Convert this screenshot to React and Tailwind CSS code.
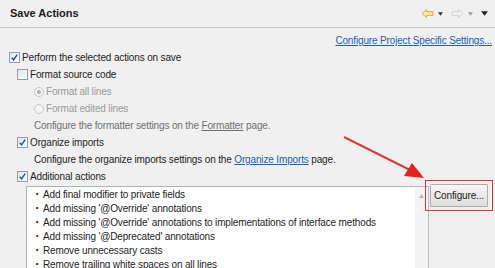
import React from "react";

const Check = ({ checked }) => (
  <span className="inline-flex w-[11px] h-[11px] border border-[#8e9eb5] bg-gradient-to-br from-[#dfe6ef] to-white items-center justify-center shrink-0">
    {checked && (
      <svg width="9" height="9" viewBox="0 0 10 10">
        <path d="M2 5.2 L4 7.6 L8 1.8" stroke="#2c4f9e" strokeWidth="1.7" fill="none" />
      </svg>
    )}
  </span>
);

const Radio = ({ checked }) => (
  <span className="inline-flex w-[10px] h-[10px] rounded-full border border-[#c8c8c8] bg-[#f4f4f4] items-center justify-center shrink-0">
    {checked && <span className="w-[4px] h-[4px] rounded-full bg-[#b0b0b0]" />}
  </span>
);

const items = [
  "Add final modifier to private fields",
  "Add missing '@Override' annotations",
  "Add missing '@Override' annotations to implementations of interface methods",
  "Add missing '@Deprecated' annotations",
  "Remove unnecessary casts",
  "Remove trailing white spaces on all lines",
];

export default function App() {
  return (
    <div
      className="relative w-[495px] h-[268px] overflow-hidden bg-[#f0f0f0] text-[10px] tracking-[-0.15px] text-[#1e1e1e] whitespace-nowrap"
      style={{ fontFamily: '"Liberation Sans", Arial, sans-serif' }}
    >
      {/* Header */}
      <div className="h-[28px] flex items-center justify-between pl-[10px] pr-[7px] border-b border-[#c9c9c9]">
        <span className="font-bold text-[11px] tracking-normal text-[#1a1a1a]">Save Actions</span>
        <div className="flex items-center gap-[4px]">
          <svg width="13" height="11" viewBox="0 0 14 12">
            <path d="M1 6 L6 1.5 L6 4 L13 4 L13 8 L6 8 L6 10.5 Z" fill="#fbe8a0" stroke="#d9a833" strokeWidth="1" />
          </svg>
          <svg width="5" height="4" viewBox="0 0 6 4"><path d="M0 0 L6 0 L3 4 Z" fill="#333" /></svg>
          <svg width="13" height="11" viewBox="0 0 14 12" className="ml-[4px]">
            <path d="M13 6 L8 1.5 L8 4 L1 4 L1 8 L8 8 L8 10.5 Z" fill="#f2f2f2" stroke="#cfcfcf" strokeWidth="1" />
          </svg>
          <svg width="5" height="4" viewBox="0 0 6 4"><path d="M0 0 L6 0 L3 4 Z" fill="#999" /></svg>
          <svg width="7" height="5" viewBox="0 0 8 5" className="ml-[4px]"><path d="M0 0 L8 0 L4 5 Z" fill="#222" /></svg>
        </div>
      </div>

      {/* Link row */}
      <div className="flex justify-end pr-[3px] pt-[5px] h-[21px]">
        <span className="text-[#1d5fb4] underline">Configure Project Specific Settings...</span>
      </div>

      <div className="flex flex-col pl-[9px]">
        <div className="h-[17px] flex items-center gap-[2px]">
          <Check checked />
          <span>Perform the selected actions on save</span>
        </div>
        <div className="pl-[8px] flex flex-col">
          <div className="h-[17px] flex items-center gap-[2px]">
            <Check />
            <span>Format source code</span>
          </div>
          <div className="pl-[17px] flex flex-col text-[#9a9a9a]">
            <div className="h-[17px] flex items-center gap-[2px]">
              <Radio checked />
              <span>Format all lines</span>
            </div>
            <div className="h-[17px] flex items-center gap-[2px]">
              <Radio />
              <span>Format edited lines</span>
            </div>
          </div>
          <div className="pl-[17px] h-[17px] flex items-center text-[#707070]">
            <span>
              Configure the formatter settings on the <span className="underline">Formatter</span> page.
            </span>
          </div>
          <div className="h-[17px] flex items-center gap-[2px]">
            <Check checked />
            <span>Organize imports</span>
          </div>
          <div className="pl-[17px] h-[17px] flex items-center">
            <span>
              Configure the organize imports settings on the{" "}
              <span className="text-[#1d5fb4] underline">Organize Imports</span> page.
            </span>
          </div>
          <div className="h-[17px] flex items-center gap-[2px]">
            <Check checked />
            <span>Additional actions</span>
          </div>
        </div>
      </div>

      {/* List and button */}
      <div className="flex pl-[26px] mt-[1px]">
        <div className="w-[403px] h-[90px] flex bg-white border-t border-l border-[#aeb4bb]">
          <div className="flex-1 flex flex-col pl-[4px]">
            {items.map((t) => (
              <div key={t} className="h-[14px] flex items-center">
                <span className="w-[12px] text-center text-[8px]">•</span>
                <span>{t}</span>
              </div>
            ))}
          </div>
          <div className="w-[14px] flex flex-col items-center bg-[#f4f4f4] border-r border-[#bdbdbd]">
            <svg width="5" height="4" viewBox="0 0 5 4" className="mt-[7px]"><path d="M0 4 L5 4 L2.5 0 Z" fill="#b5b5b5" /></svg>
          </div>
        </div>
        <div className="ml-[-4px] mt-[-6px] w-[68px] h-[31px] border border-[#d8343f] flex items-center justify-center">
          <div className="w-[58px] h-[23px] border border-[#adadad] bg-gradient-to-b from-[#f6f6f6] to-[#dedede] flex items-center justify-center rounded-[1px]">
            <span>Configure...</span>
          </div>
        </div>
      </div>

      {/* Red arrow overlay */}
      <svg className="absolute left-0 top-0" width="495" height="268" viewBox="0 0 495 268">
        <line x1="344" y1="137" x2="410" y2="170" stroke="#e23a3a" strokeWidth="2" />
        <path d="M424 178 L404 176 L412 163 Z" fill="#e52222" />
      </svg>
    </div>
  );
}
